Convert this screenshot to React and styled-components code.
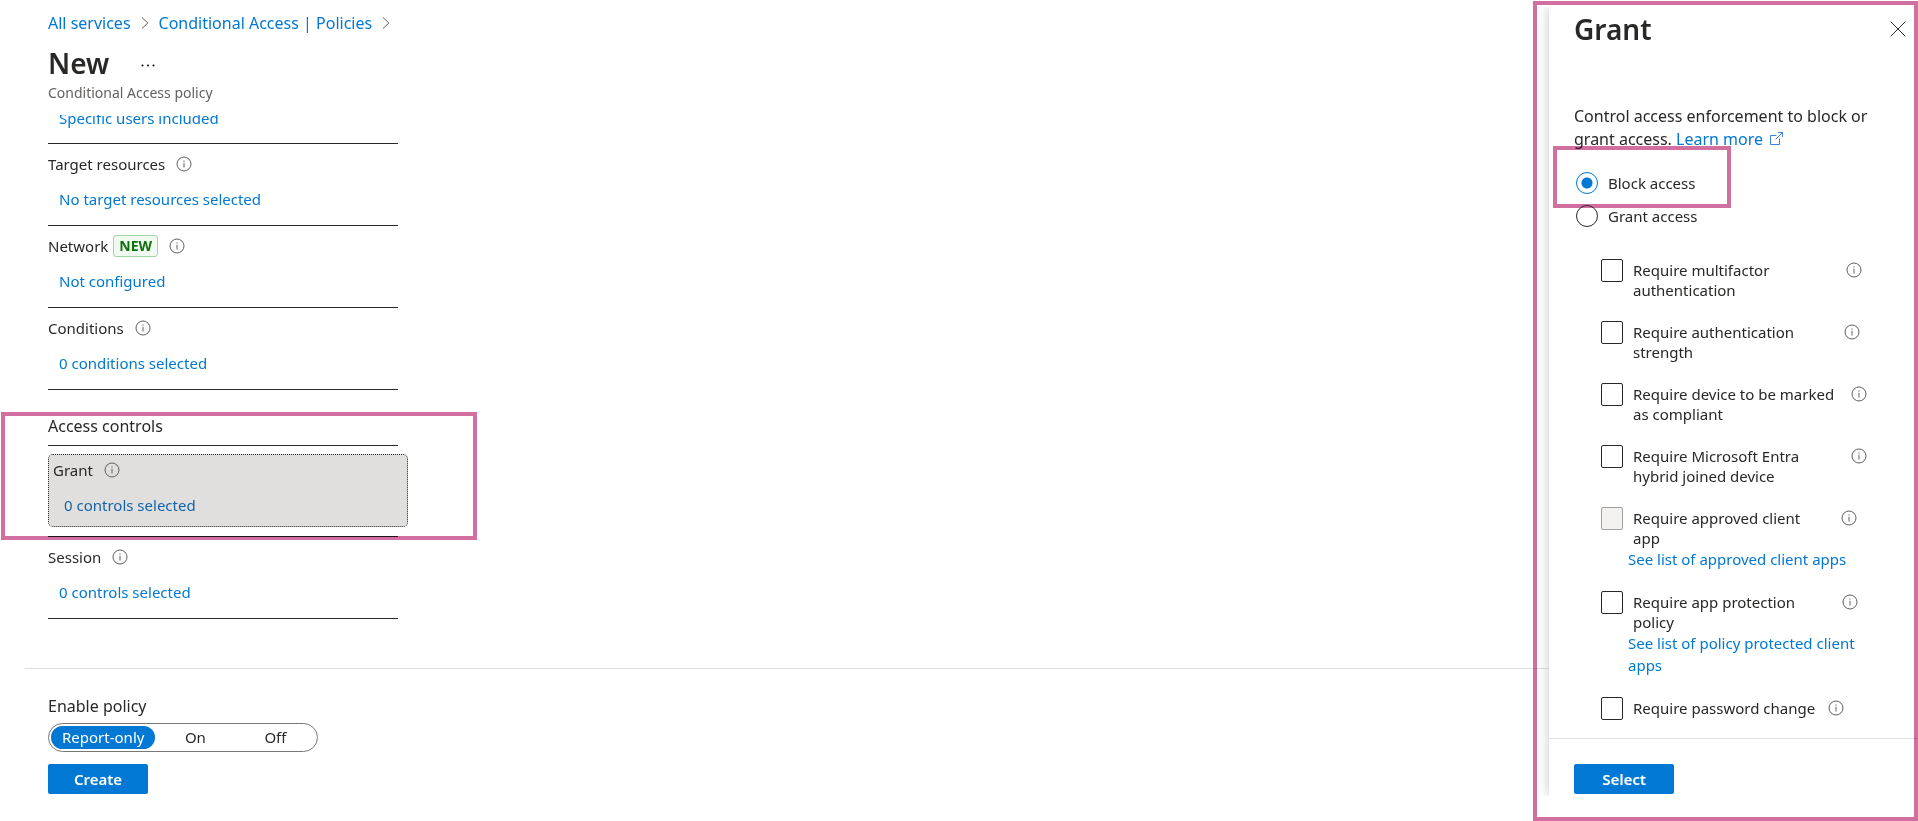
import { useState } from "react";
import styled, { createGlobalStyle, css } from "styled-components";

const policyItems = [
    { label: "Target resources", value: "No target resources selected" },
    { label: "Network", value: "Not configured", isNew: true },
    { label: "Conditions", value: "0 conditions selected" },
];

const grantControls = [
    { id: "mfa", label: "Require multifactor authentication", width: 202 },
    { id: "strength", label: "Require authentication strength", width: 200 },
    { id: "compliant", label: "Require device to be marked as compliant", width: 207 },
    { id: "hybrid", label: "Require Microsoft Entra hybrid joined device", width: 207 },
    { id: "client", label: "Require approved client app", width: 197, disabled: true, link: "See list of approved client apps" },
    { id: "protection", label: "Require app protection policy", width: 198, link: "See list of policy protected client apps" },
    { id: "password", label: "Require password change", width: 184 },
];

const InfoIcon = () => (
    <Info viewBox="0 0 16 16" aria-hidden="true">
        <circle cx="8" cy="8" r="7" />
        <path d="M8 6.8v4.7" />
        <path d="M8 4.4v1.2" />
    </Info>
);

const Chevron = () => (
    <ChevronSvg viewBox="0 0 8 14" aria-hidden="true">
        <path d="M1 1.5 6.8 7 1 12.5" />
    </ChevronSvg>
);

const ExternalIcon = () => (
    <External viewBox="0 0 13 13" aria-hidden="true">
        <path d="M6.5 3.5h-6v9h9v-6" />
        <path d="M8 .5h4.500v4.500M12.500.5 5.500 7.500" />
    </External>
);

function PolicyItem({ label, value, isNew, selected }){
    return(
        <Item $selected={selected}>
            <ItemBody $selected={selected}>
                <ItemLabel>
                    {label}
                    {isNew && <Badge>NEW</Badge>}
                    <InfoIcon/>
                </ItemLabel>
                <ItemLink href="#" $selected={selected}>{value}</ItemLink>
            </ItemBody>
        </Item>
    )
}

export default function App(){
    const [access, setAccess] = useState("block");
    const [mode, setMode] = useState("Report-only");
    const [checked, setChecked] = useState({});
    const toggle = (id)=>{
        setChecked(prev=>({...prev, [id]: !prev[id]}))
    }
    return(
        <Page>
            <GlobalStyle/>
            <Main>
                <Breadcrumb>
                    <a href="#">All services</a>
                    <Chevron/>
                    <a href="#">Conditional Access | Policies</a>
                    <Chevron/>
                </Breadcrumb>
                <TitleRow>
                    <Title>New</Title>
                    <MoreButton type="button" aria-label="More">
                        <svg width="14" height="3" viewBox="0 0 14 3" aria-hidden="true">
                            <circle cx="1.5" cy="1.5" r="1"/>
                            <circle cx="7" cy="1.5" r="1"/>
                            <circle cx="12.5" cy="1.5" r="1"/>
                        </svg>
                    </MoreButton>
                </TitleRow>
                <Subtitle>Conditional Access policy</Subtitle>
                <PolicyScroll>
                    <PolicyList>
                        <ClippedItem>
                            <ItemLink href="#">Specific users included</ItemLink>
                        </ClippedItem>
                        {policyItems.map(e=>
                            <PolicyItem key={e.label} {...e}/>
                        )}
                        <AccessControls>
                            <SectionTitle>Access controls</SectionTitle>
                            <PolicyItem label="Grant" value="0 controls selected" selected/>
                        </AccessControls>
                        <PolicyItem label="Session" value="0 controls selected"/>
                    </PolicyList>
                </PolicyScroll>
                <Footer>
                    <ToggleTitle id="enable-policy">Enable policy</ToggleTitle>
                    <ToggleGroup role="radiogroup" aria-labelledby="enable-policy">
                        {["Report-only", "On", "Off"].map(e=>
                            <ToggleOption key={e}>
                                <input type="radio" name="mode" checked={mode===e} onChange={()=>setMode(e)}/>
                                <span>{e}</span>
                            </ToggleOption>
                        )}
                    </ToggleGroup>
                    <PrimaryButton type="button">Create</PrimaryButton>
                </Footer>
            </Main>
            <PanelColumn>
                <Panel>
                    <PanelHeader>
                        <Title as="h2">Grant</Title>
                        <CloseButton type="button" aria-label="Close">
                            <svg width="16" height="16" viewBox="0 0 16 16" aria-hidden="true">
                                <path d="M.7.7l14.6 14.6M15.3.7.7 15.3"/>
                            </svg>
                        </CloseButton>
                    </PanelHeader>
                    <PanelBody>
                        <Intro>
                            Control access enforcement to block or grant access. <a href="#">Learn more <ExternalIcon/></a>
                        </Intro>
                        <RadioRow $marked>
                            <Radio type="radio" name="access" checked={access==="block"} onChange={()=>setAccess("block")}/>
                            Block access
                        </RadioRow>
                        <RadioRow>
                            <Radio type="radio" name="access" checked={access==="grant"} onChange={()=>setAccess("grant")}/>
                            Grant access
                        </RadioRow>
                        <ControlList>
                            {grantControls.map(e=>
                                <li key={e.id}>
                                    <ControlRow>
                                        <Checkbox id={e.id} type="checkbox" disabled={e.disabled} checked={!!checked[e.id]} onChange={()=>toggle(e.id)}/>
                                        <ControlLabel htmlFor={e.id} $width={e.width}>{e.label}</ControlLabel>
                                        <InfoIcon/>
                                    </ControlRow>
                                    {e.link && <ControlLink href="#">{e.link}</ControlLink>}
                                </li>
                            )}
                        </ControlList>
                    </PanelBody>
                    <PanelFooter>
                        <PrimaryButton type="button">Select</PrimaryButton>
                    </PanelFooter>
                </Panel>
            </PanelColumn>
        </Page>
    )
}

const GlobalStyle = createGlobalStyle`
    *{
        box-sizing: border-box;
    }
    body{
        margin: 0;
        background: #fff;
        color: #292827;
        font-family: "Segoe UI", "Noto Sans", "Open Sans", sans-serif;
        font-size: 15px;
        line-height: 20px;
    }
    a{
        color: #0078d4;
        text-decoration: none;
    }
    h1, h2, h3, p, ul{
        margin: 0;
        padding: 0;
    }
    button, input{
        font: inherit;
    }
`
// pink callout drawn over the content
const callout = css`
    content: "";
    position: absolute;
    border: 4px solid #d16fa1;
    mix-blend-mode: multiply;
    pointer-events: none;
`
const Page = styled.div`
    display: flex;
    min-height: 100vh;
`
const Main = styled.main`
    flex: 1;
    min-width: 0;
    display: flex;
    flex-direction: column;
    padding-left: 25px;
`
const Breadcrumb = styled.nav`
    display: flex;
    align-items: center;
    gap: 10px;
    padding: 11px 0 0 23px;
    font-size: 16px;
    line-height: 24px;
`
const ChevronSvg = styled.svg`
    width: 8px;
    height: 14px;
    fill: none;
    stroke: #605e5c;
`
const TitleRow = styled.div`
    display: flex;
    align-items: center;
    gap: 24px;
    padding: 8px 0 0 23px;
`
const Title = styled.h1`
    font-size: 28px;
    font-weight: 600;
    line-height: 40px;
`
const MoreButton = styled.button`
    display: flex;
    padding: 12px 8px 8px;
    border: none;
    background: none;
`
const Subtitle = styled.p`
    padding: 0 0 0 23px;
    font-size: 14px;
    color: #646260;
`
const PolicyScroll = styled.div`
    flex: 1;
    margin-top: 12px;
    padding-left: 23px;
`
const PolicyList = styled.div`
    width: 350px;
`
const ClippedItem = styled.div`
    height: 29px;
    display: flex;
    flex-direction: column;
    justify-content: flex-end;
    overflow: hidden;
    padding-bottom: 15px;
    border-bottom: 1px solid #292827;
`
const Item = styled.div`
    border-bottom: 1px solid #292827;
    padding: ${props=>props.$selected?"8px 0 9px":"10px 0 16px"};
`
const ItemBody = styled.div`
    display: flex;
    flex-direction: column;
    align-items: flex-start;
    gap: 15px;
    ${props=>props.$selected && css`
        width: calc(100% + 10px);
        padding: 5px 4px 11px;
        border: 1px dotted #292827;
        border-radius: 5px;
        background-color: #e1dfdd;
    `}
`
const ItemLabel = styled.div`
    display: flex;
    align-items: center;
    height: 20px;
`
const Info = styled.svg`
    flex: none;
    width: 16px;
    height: 16px;
    margin-left: 11px;
    fill: none;
    stroke: #605e5c;
`
const ItemLink = styled.a`
    margin-left: 11px;
    color: ${props=>props.$selected?"#1264ab":"#0078d4"};
`
const Badge = styled.span`
    margin-left: 5px;
    padding: 0 5px;
    border: 1px solid #9fd89f;
    border-radius: 3px;
    background-color: #f1faf1;
    color: #0e700e;
    font-size: 14px;
    font-weight: 700;
`
const AccessControls = styled.section`
    position: relative;
    padding-top: 24px;
    &::after{
        ${callout}
        top: 22px;
        right: -79px;
        bottom: -3px;
        left: -47px;
    }
`
const SectionTitle = styled.h3`
    padding-bottom: 7px;
    border-bottom: 1px solid #292827;
    font-size: 16px;
    font-weight: 400;
    line-height: 24px;
`
const Footer = styled.footer`
    padding: 25px 0 27px 23px;
    border-top: 1px solid #e1dfdd;
`
const ToggleTitle = styled.div`
    font-size: 16px;
    line-height: 24px;
`
const ToggleGroup = styled.div`
    display: inline-flex;
    margin: 5px 0 12px;
    padding: 2px;
    border: 1px solid #797775;
    border-radius: 15px;
`
const ToggleOption = styled.label`
    display: block;
    cursor: pointer;
    input{
        position: absolute;
        opacity: 0;
    }
    span{
        display: block;
        min-width: 80px;
        padding: 0 11px;
        border-radius: 12px;
        line-height: 23px;
        text-align: center;
    }
    input:checked + span{
        background-color: #0078d4;
        color: #fff;
    }
`
const PrimaryButton = styled.button`
    display: block;
    width: 100px;
    height: 30px;
    padding: 0 0 1px;
    border: none;
    border-radius: 2px;
    background-color: #0078d4;
    color: #fff;
    font-weight: 600;
    cursor: pointer;
`
const PanelColumn = styled.aside`
    position: relative;
    display: flex;
    flex: none;
    width: 369px;
    padding: 7px 0 25px;
    &::after{
        ${callout}
        inset: 1px 0 0 -16px;
    }
`
const Panel = styled.div`
    flex: 1;
    display: flex;
    flex-direction: column;
    background-color: #fff;
    box-shadow: 0 0 12px rgba(0, 0, 0, 0.22);
    clip-path: inset(0 0 0 -16px);
`
const PanelHeader = styled.header`
    display: flex;
    align-items: center;
    justify-content: space-between;
    padding: 2px 12px 0 25px;
`
const CloseButton = styled.button`
    display: flex;
    padding: 0;
    border: none;
    background: none;
    cursor: pointer;
    svg{
        stroke: #292827;
    }
`
const PanelBody = styled.div`
    flex: 1;
    padding: 56px 25px 0;
`
const Intro = styled.p`
    margin-bottom: 15px;
    font-size: 16px;
    line-height: 23px;
`
const External = styled.svg`
    width: 13px;
    height: 13px;
    margin-left: 3px;
    fill: none;
    stroke: #3b82e0;
`
const RadioRow = styled.label`
    position: relative;
    display: flex;
    align-items: center;
    gap: 10px;
    height: 33px;
    ${props=>props.$marked && css`
        &::after{
            ${callout}
            top: -20px;
            right: 162px;
            bottom: -9px;
            left: -21px;
        }
    `}
`
const Radio = styled.input`
    appearance: none;
    width: 22px;
    height: 22px;
    margin: 0 0 0 2px;
    border: 1px solid #292827;
    border-radius: 50%;
    &:checked{
        border-color: #0078d4;
        background: radial-gradient(circle, #0078d4 5px, #fff 6px);
    }
`
const ControlList = styled.ul`
    display: flex;
    flex-direction: column;
    gap: 21px;
    padding: 27px 0 0 27px;
    list-style: none;
`
const ControlRow = styled.div`
    display: flex;
    align-items: flex-start;
    > svg{
        margin-top: 3px;
    }
`
const Checkbox = styled.input`
    appearance: none;
    flex: none;
    width: 22px;
    height: 23px;
    margin: 0 10px 0 0;
    border: 1px solid #292827;
    border-radius: 2px;
    &:checked{
        background-color: #0078d4;
    }
    &:disabled{
        border-color: #a19f9d;
        background-color: #f3f2f1;
    }
`
const ControlLabel = styled.label`
    flex: none;
    width: ${props=>props.$width}px;
    padding-top: 1px;
`
const ControlLink = styled.a`
    display: block;
    width: 280px;
    padding-left: 27px;
    line-height: 22px;
`
const PanelFooter = styled.footer`
    padding: 25px 25px 2px;
    border-top: 1px solid #e1dfdd;
`
